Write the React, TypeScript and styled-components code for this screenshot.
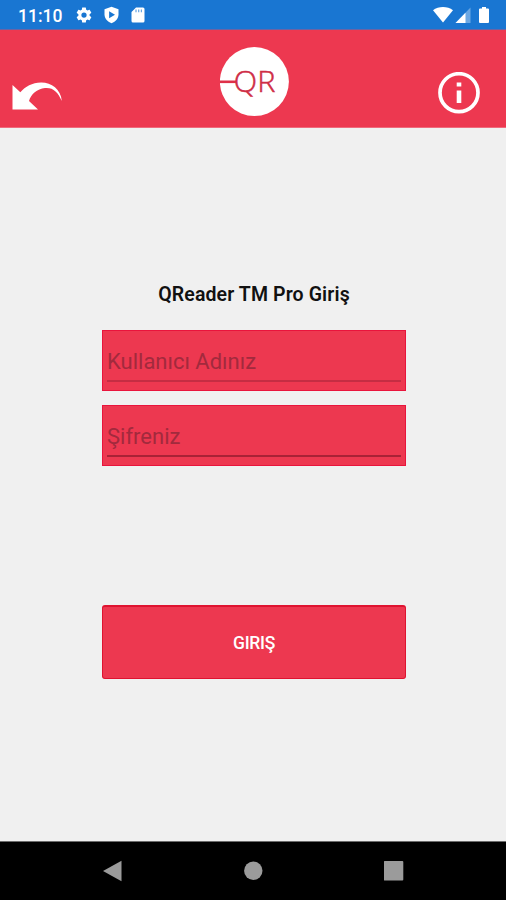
import React from "react";
import styled, { createGlobalStyle } from "styled-components";

const GlobalStyle = createGlobalStyle`
  * { box-sizing: border-box; }
  html, body { margin: 0; padding: 0; }
  body { font-family: Roboto, "Liberation Sans", sans-serif; background: #f0f0f0; }
`;

const Screen = styled.div`
  width: 506px;
  height: 900px;
  display: flex;
  flex-direction: column;
  overflow: hidden;
  background: #f0f0f0;
`;

const StatusBar = styled.header`
  height: 30px;
  flex: none;
  display: flex;
  align-items: center;
  justify-content: space-between;
  padding: 0 16px 0 18px;
  background: #1976d2;
  border-bottom: 1px solid #6a64a5;
  color: #fff;
`;

const StatusIcons = styled.div`
  display: flex;
  align-items: center;
  flex: 1;
  padding-left: 11px;
  svg { display: block; margin-right: 11px; }
`;

const Clock = styled.span`
  width: 46px;
  font-size: 17.5px;
  line-height: 20px;
  font-weight: 500;
  padding-top: 2px;
`;

const AppBar = styled.div`
  height: 98px;
  flex: none;
  display: grid;
  grid-template-columns: 1fr 74px 1fr;
  background: #ed3850;
  border-bottom: 1px solid #ef6a7c;
  svg { display: block; flex: none; }
`;

const BarSlot = styled.div<{ $side: "left" | "center" | "right" }>`
  display: flex;
  justify-content: ${(p) => (p.$side === "right" ? "flex-end" : "flex-start")};
  padding: ${(p) =>
    p.$side === "left" ? "52px 0 0 12px" : p.$side === "right" ? "42px 25px 0 0" : "17px 0 0 4px"};
`;

const IconButton = styled.button`
  border: 0;
  padding: 0;
  background: none;
  height: max-content;
`;

const Form = styled.form`
  flex: 1;
  display: flex;
  flex-direction: column;
  align-items: center;
  padding-left: 2px;
`;

const Title = styled.h1`
  margin: 155px 0 24px;
  font-size: 19.5px;
  line-height: 23px;
  font-weight: 600;
  letter-spacing: 0.12px;
  color: #111;
  white-space: nowrap;
`;

const Field = styled.label`
  width: 304px;
  height: 61px;
  margin-bottom: 14px;
  display: flex;
  padding: 1px 4px 8px 4px;
  background: #ed3850;
  border: 1px solid #e9143c;
`;

const Input = styled.input<{ $line: string }>`
  flex: 1;
  min-width: 0;
  border: 0;
  border-bottom: 2px solid ${(p) => p.$line};
  border-radius: 0;
  outline: 0;
  padding: 10px 0 0;
  background: transparent;
  font-family: inherit;
  font-size: 22px;
  color: #222;
  &::placeholder { color: #a22a3d; opacity: 1; }
`;

const Submit = styled.button`
  width: 304px;
  height: 74px;
  margin-top: 125px;
  padding: 1px 0 0;
  border: 1px solid #df1330;
  border-top-width: 2px;
  border-radius: 3px;
  background: #ed3850;
  color: #fff;
  font-family: inherit;
  font-size: 17.5px;
  font-weight: 500;
  letter-spacing: -0.3px;
`;

const NavBar = styled.nav`
  height: 59px;
  flex: none;
  display: flex;
  justify-content: space-between;
  padding: 18px 102px 0;
  background: #000;
  border-top: 1px solid #6c6c6c;
  svg { display: block; }
`;

const GearIcon = () => (
  <svg width="18" height="18" viewBox="0 0 24 24" fill="#fff">
    <path d="M19.43 12.98c.04-.32.07-.64.07-.98s-.03-.66-.07-.98l2.11-1.65c.19-.15.24-.42.12-.64l-2-3.46c-.12-.22-.39-.3-.61-.22l-2.49 1c-.52-.4-1.08-.73-1.69-.98l-.38-2.65A.49.49 0 0 0 14 2h-4c-.25 0-.46.18-.49.42l-.38 2.65c-.61.25-1.17.59-1.69.98l-2.49-1c-.23-.09-.49 0-.61.22l-2 3.46c-.13.22-.07.49.12.64l2.11 1.65c-.04.32-.07.65-.07.98s.03.66.07.98l-2.11 1.65c-.19.15-.24.42-.12.64l2 3.46c.12.22.39.3.61.22l2.49-1c.52.4 1.08.73 1.69.98l.38 2.65c.03.24.24.42.49.42h4c.25 0 .46-.18.49-.42l.38-2.65c.61-.25 1.17-.59 1.69-.98l2.49 1c.23.09.49 0 .61-.22l2-3.46c.12-.22.07-.49-.12-.64zM12 15.5a3.5 3.5 0 1 1 0-7 3.5 3.5 0 0 1 0 7z" />
  </svg>
);

const ShieldIcon = () => (
  <svg width="16" height="18" viewBox="0 0 16 18">
    <path d="M7.500 .7 14.500 3.300v5c0 4.200-2.800 7.300-7 9-4.200-1.700-7-4.800-7-9v-5z" fill="#fff" />
    <path d="M5.100 5.200v7L11 8.700z" fill="#1976d2" />
  </svg>
);

const CardIcon = () => (
  <svg width="14" height="16" viewBox="0 0 14 16">
    <path d="M5 .5h7A1.500 1.500 0 0 1 13.500 2v12a1.500 1.500 0 0 1-1.500 1.500H2A1.500 1.500 0 0 1 .5 14V5z" fill="#fff" />
    <path d="M5 2.500v2.700M7.700 2.500v2.700M10.400 2.500v2.700" stroke="#1976d2" strokeWidth="1.200" opacity=".65" />
  </svg>
);

const SignalIcons = () => (
  <svg width="57" height="18" viewBox="433 6 57 18">
    <path d="M433 10.300C438.500 6 447.500 6 453 10.300L443 22.500z" fill="#fff" />
    <path d="M470.500 7.500v15.500H455.500z" fill="#6ba7e3" />
    <path d="M465.500 12.700V23H455.500z" fill="#fff" />
    <path d="M482 7h4v1.600h2q1 0 1 1V22q0 1-1 1h-8q-1 0-1-1V9.600q0-1 1-1h2z" fill="#fff" />
  </svg>
);

const BackArrow = () => (
  <svg width="51" height="29" viewBox="12 82 51 29">
    <path d="M12.500 85v24.500H38L29 101C31 94 37 89 45 88c8-.8 13 4 16.800 13C61 89 51 82.300 41 82.500 32 82.700 25.500 86.500 20.300 92.300z" fill="#fff" />
  </svg>
);

const QRLogo = () => (
  <svg width="70" height="70" viewBox="0 0 70 70">
    <circle cx="34.400" cy="34.600" r="34.500" fill="#fff" />
    <path d="M0 34.800h16" stroke="#df3048" strokeWidth="2.600" />
    <text x="13.800" y="45" textLength="41.500" lengthAdjust="spacingAndGlyphs" fontFamily="'Open Sans', sans-serif" fontWeight="300" fontSize="29" fill="#cf2d46" stroke="#cf2d46" strokeWidth=".5">QR</text>
  </svg>
);

const InfoIcon = () => (
  <svg width="44" height="44" viewBox="0 0 44 44">
    <circle cx="22" cy="20.700" r="19" fill="none" stroke="#fff" strokeWidth="3.700" />
    <path d="M19.700 10.500h4.600v4h-4.600zM19.700 18.500h4.600v12.500h-4.600z" fill="#fff" />
  </svg>
);

export default function App() {
  return (
    <>
      <GlobalStyle />
      <Screen>
        <StatusBar>
          <Clock>11:10</Clock>
          <StatusIcons>
            <GearIcon />
            <ShieldIcon />
            <CardIcon />
          </StatusIcons>
          <SignalIcons />
        </StatusBar>
        <AppBar>
          <BarSlot $side="left">
            <IconButton aria-label="Geri"><BackArrow /></IconButton>
          </BarSlot>
          <BarSlot $side="center"><QRLogo /></BarSlot>
          <BarSlot $side="right">
            <IconButton aria-label="Bilgi"><InfoIcon /></IconButton>
          </BarSlot>
        </AppBar>
        <Form onSubmit={(e) => e.preventDefault()}>
          <Title>QReader TM Pro Giriş</Title>
          <Field><Input $line="#c52d43" placeholder="Kullanıcı Adınız" /></Field>
          <Field><Input $line="#a92236" type="password" placeholder="Şifreniz" /></Field>
          <Submit>GIRIŞ</Submit>
        </Form>
        <NavBar>
          <svg width="21" height="22" viewBox="0 0 21 22"><path d="M1 11 19.500.8v20.500z" fill="#9b9b9b" /></svg>
          <svg width="20" height="22" viewBox="0 0 20 22"><circle cx="9.300" cy="10.800" r="9.200" fill="#9b9b9b" /></svg>
          <svg width="20" height="22" viewBox="0 0 20 22"><rect x="-.2" y="1" width="19.500" height="19.500" rx="1" fill="#9b9b9b" /></svg>
        </NavBar>
      </Screen>
    </>
  );
}
